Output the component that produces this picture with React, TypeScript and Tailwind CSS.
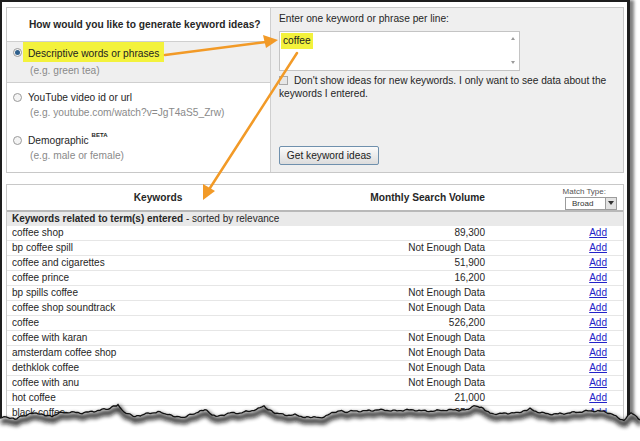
import React from "react";

const rows: [string, string][] = [
  ["coffee shop", "89,300"],
  ["bp coffee spill", "Not Enough Data"],
  ["coffee and cigarettes", "51,900"],
  ["coffee prince", "16,200"],
  ["bp spills coffee", "Not Enough Data"],
  ["coffee shop soundtrack", "Not Enough Data"],
  ["coffee", "526,200"],
  ["coffee with karan", "Not Enough Data"],
  ["amsterdam coffee shop", "Not Enough Data"],
  ["dethklok coffee", "Not Enough Data"],
  ["coffee with anu", "Not Enough Data"],
  ["hot coffee", "21,000"],
  ["black coffee", "35,300"],
];

const tearPts: [number, number][] = [
  [0, 418], [8, 417], [15, 419], [22, 416], [30, 414], [38, 413], [45, 415], [52, 416], [60, 413], [70, 412],
  [80, 413], [90, 412], [100, 410], [108, 409], [115, 406], [118, 405], [122, 410], [128, 414], [135, 417],
  [142, 415], [150, 413], [158, 412], [166, 414], [175, 416], [183, 418], [190, 415], [198, 412], [205, 409],
  [210, 413], [216, 417], [222, 415], [230, 413], [240, 413], [250, 411], [258, 409], [264, 406], [268, 409],
  [275, 413], [285, 415], [295, 415], [305, 417], [312, 417], [320, 418], [330, 414], [338, 411], [345, 412],
  [355, 411], [365, 411], [375, 410], [385, 410], [395, 411], [405, 410], [415, 410], [425, 411], [435, 411],
  [445, 410], [455, 410], [465, 410], [472, 407], [478, 406], [483, 408], [490, 413], [498, 414], [508, 413],
  [518, 413], [525, 411], [530, 409], [538, 412], [548, 414], [558, 414], [568, 413], [578, 412], [588, 411],
  [598, 411], [606, 412], [612, 414], [618, 418], [624, 420], [628, 416], [631, 412], [635, 416], [640, 420],
];

function buildTear() {
  const out: [number, number][] = [];
  for (let i = 0; i < tearPts.length - 1; i++) {
    const [x0, y0] = tearPts[i];
    const [x1, y1] = tearPts[i + 1];
    const steps = Math.max(1, Math.round((x1 - x0) / 2));
    for (let s = 0; s < steps; s++) {
      const t = s / steps;
      const j = Math.sin((x0 + t * (x1 - x0)) * 2.7) * 0.6 + Math.sin((x0 + t * (x1 - x0)) * 7.3) * 0.4;
      out.push([x0 + t * (x1 - x0), y0 + t * (y1 - y0) + j]);
    }
  }
  out.push(tearPts[tearPts.length - 1]);
  return out;
}

const tear = buildTear();
const tearLine = tear.map((p, i) => `${i === 0 ? "M" : "L"}${p[0].toFixed(1)},${p[1].toFixed(1)}`).join(" ");
const tearFill = `${tearLine} L640,441 L0,441 Z`;

function Radio({ checked }: { checked?: boolean }) {
  return (
    <span className="inline-flex w-[9px] h-[9px] rounded-full border border-[#9a9a9a] bg-[#f4f4f4] items-center justify-center shrink-0">
      {checked && <span className="w-[5px] h-[5px] rounded-full bg-[#2e5f8c]" />}
    </span>
  );
}

export default function App() {
  return (
    <div className="relative w-[640px] h-[441px] bg-white overflow-hidden font-['Liberation_Sans',Arial,sans-serif] text-[10.2px] text-[#262626]">
      <div className="w-[630px] h-[430px] border-l-2 border-t-2 border-r-[3px] border-[#1e1e1e] shadow-[4px_0_3px_rgba(0,0,0,0.5)] pl-[4px] pt-[5px] bg-white">
        {/* Top panel */}
        <div className="flex w-[618px] h-[166px] border border-[#c8c8c8]">
          {/* left */}
          <div className="w-[263px] flex flex-col">
            <div className="h-[34px] border-b border-[#cfcfcf] flex items-center pl-[22px] font-bold">
              How would you like to generate keyword ideas?
            </div>
            <div className="h-[41px] bg-[#efefef] border-b border-[#cfcfcf]">
              <div className="flex items-center h-[20px] pl-[6px]">
                <Radio checked />
                <span className="ml-[1px] h-[20px] bg-[#f3f23c] px-[5px] pt-[5px] leading-[13px] text-[#222]">
                  Descriptive words or phrases
                </span>
              </div>
              <div className="pl-[23px] mt-[2px] leading-[13px] text-[#8a8a8a]">(e.g. green tea)</div>
            </div>
            <div className="pt-[8px]">
              <div className="flex items-center h-[13px] pl-[6px] leading-[13px]">
                <Radio />
                <span className="ml-[6px]">YouTube video id or url</span>
              </div>
              <div className="pl-[23px] mt-[2px] leading-[13px] text-[#8a8a8a]">
                (e.g. youtube.com/watch?v=JgT4aS5_Zrw)
              </div>
              <div className="flex items-center h-[13px] pl-[6px] leading-[13px] mt-[15px]">
                <Radio />
                <span className="ml-[6px]">Demographic</span>
                <span className="ml-[3px] text-[6px] font-bold self-start leading-[8px] -mt-[3px]">BETA</span>
              </div>
              <div className="pl-[23px] mt-[2px] leading-[13px] text-[#8a8a8a]">(e.g. male or female)</div>
            </div>
          </div>
          {/* right */}
          <div className="flex-1 bg-[#efefef] border-l border-[#cfcfcf] pl-[8px] pt-[4px]">
            <div className="leading-[13px]">Enter one keyword or phrase per line:</div>
            <div className="relative mt-[6px] w-[241px] h-[40px] bg-white border border-[#c4c4c4]">
              <span className="absolute left-[1px] top-[1px] h-[16px] w-[32px] bg-[#f3f23c] pl-[2px] leading-[15px] text-[#222]">
                coffee
              </span>
              <span className="absolute right-[4px] top-[5px] w-0 h-0 border-l-[2px] border-r-[2px] border-b-[3px] border-l-transparent border-r-transparent border-b-[#9a9a9a]" />
              <span className="absolute right-[4px] bottom-[6px] w-0 h-0 border-l-[2px] border-r-[2px] border-t-[3px] border-l-transparent border-r-transparent border-t-[#9a9a9a]" />
            </div>
            <div className="mt-[3px] leading-[13px] pr-[6px]">
              <span className="inline-block w-[9px] h-[9px] border border-[#a8a8a8] bg-[#e6e6e6] align-[-1px] mr-[6px]" />
              Don't show ideas for new keywords. I only want to see data about the keywords I entered.
            </div>
            <button className="mt-[46px] w-[100px] h-[19px] border border-[#6f90ad] rounded-[2px] bg-gradient-to-b from-[#fbfbfb] to-[#dcdcdc] text-[10.2px] text-[#222] leading-[17px] font-['Liberation_Sans',Arial,sans-serif]">
              Get keyword ideas
            </button>
          </div>
        </div>

        {/* Table */}
        <div className="mt-[11px] w-[618px] border border-[#c8c8c8] text-[10px]">
          <div className="flex h-[25px] items-center">
            <div className="w-[302px] text-center font-bold text-[10.2px]">Keywords</div>
            <div className="w-[176px] text-right font-bold text-[10.2px]">Monthly Search Volume</div>
            <div className="flex-1 flex flex-col items-end pr-[6px] pt-[1px]">
              <div className="text-[8px] leading-[9px] text-[#555] mr-[11px]">Match Type:</div>
              <div className="mt-[1px] flex w-[52px] h-[13px] border border-[#9c9c9c] bg-white">
                <span className="flex-1 text-[8px] leading-[11px] pl-[6px] text-[#333]">Broad</span>
                <span className="w-[11px] border-l border-[#9c9c9c] bg-[#e2e2e2] flex items-center justify-center">
                  <span className="w-0 h-0 border-l-[3px] border-r-[3px] border-t-[4px] border-l-transparent border-r-transparent border-t-[#333]" />
                </span>
              </div>
            </div>
          </div>
          <div className="h-[2px] bg-[#b8b8b8]" />
          <div className="h-[14px] bg-[#e9e9e9] pl-[5px] leading-[14px]">
            <span className="font-bold">Keywords related to term(s) entered</span> - sorted by relevance
          </div>
          {rows.map(([k, v]) => (
            <div key={k} className="flex h-[15px] border-b border-[#e6e6e6] leading-[14px]">
              <div className="w-[302px] pl-[5px]">{k}</div>
              <div className="w-[176px] text-right">{v}</div>
              <div className="flex-1 text-right pr-[16px]">
                <span className="text-[#2323c8] underline">Add</span>
              </div>
            </div>
          ))}
        </div>
      </div>

      {/* Overlay: arrows and torn edge */}
      <svg className="absolute inset-0 pointer-events-none" width="640" height="441" viewBox="0 0 640 441">
        <defs>
          <filter id="blur" x="-10%" y="-50%" width="120%" height="200%">
            <feGaussianBlur stdDeviation="2" />
          </filter>
        </defs>
        <line x1="165" y1="55" x2="266" y2="42" stroke="#f29a27" strokeWidth="2.5" strokeLinecap="round" />
        <polygon points="278,40 263,35 266,48" fill="#f29a27" />
        <line x1="297" y1="53" x2="210" y2="188" stroke="#f29a27" strokeWidth="2.5" strokeLinecap="round" />
        <polygon points="203,200 203,184 215,191" fill="#f29a27" />
        <path d={tearFill} fill="#ffffff" />
        <path d={tearLine} transform="translate(1,4)" fill="none" stroke="#111" strokeWidth="5" opacity="0.85" filter="url(#blur)" />
        <path d={tearLine} fill="none" stroke="#111" strokeWidth="1.3" />
      </svg>
    </div>
  );
}
